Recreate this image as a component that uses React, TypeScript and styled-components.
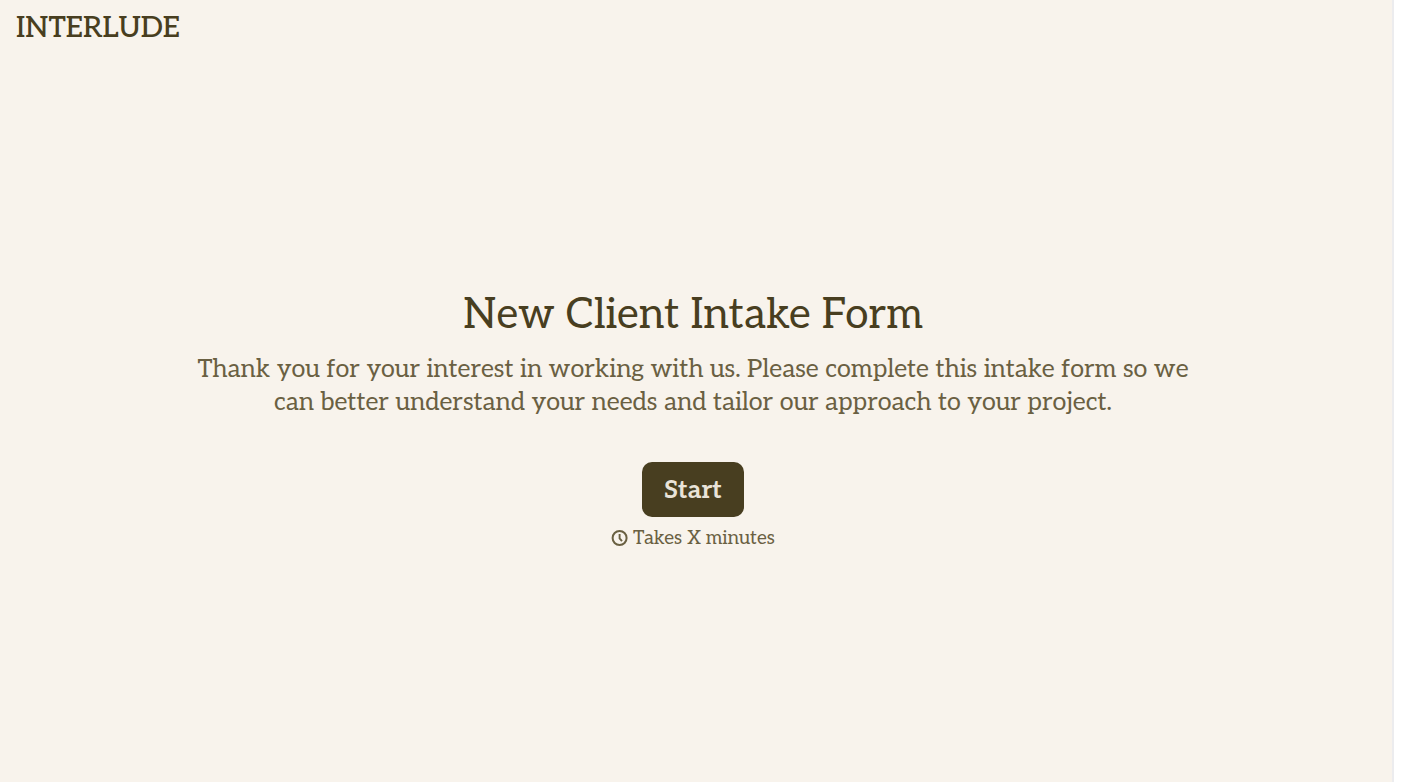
import React from "react";
import styled, { createGlobalStyle } from "styled-components";

const GlobalStyle = createGlobalStyle`
  *, *::before, *::after { box-sizing: border-box; }
  html { background: #ffffff; }
  body { margin: 0; }
`;

const Page = styled.div`
  min-height: 100vh;
  margin-right: 10px;
  display: flex;
  flex-direction: column;
  background: #f8f3ec;
  border-right: 2px solid #ececee;
  color: #483e20;
  font-family: Aleo, "Liberation Serif", serif;
`;

const Header = styled.header`
  padding: 11px 16px 5px;
`;

const Brand = styled.a`
  display: inline-block;
  color: inherit;
  text-decoration: none;
  font-size: 29px;
  font-weight: 500;
  line-height: 36px;
`;

const Welcome = styled.main`
  flex: 1;
  display: flex;
  flex-direction: column;
  align-items: center;
  justify-content: center;
  padding: 4px 38px 0 32px;
  text-align: center;
`;

const Title = styled.h1`
  margin: 0 0 10px;
  font-size: 42px;
  font-weight: 400;
  line-height: 56px;
`;

const Intro = styled.p`
  margin: 0 0 43px;
  max-width: 1000px;
  color: #6a6042;
  font-size: 25px;
  line-height: 33px;
`;

const StartButton = styled.button`
  height: 55px;
  padding: 0 22px;
  border: 0;
  border-radius: 10px;
  background: #483e20;
  color: #e9e3d8;
  font: 700 25px/32px Aleo, "Liberation Serif", serif;
  cursor: pointer;
`;

const Duration = styled.p`
  display: flex;
  align-items: center;
  gap: 4px;
  margin: 10px 0 0;
  color: #6a6042;
  font-size: 19px;
  line-height: 24px;
`;

const ClockIcon = () => (
  <svg width="18" height="18" viewBox="0 0 18 18" fill="none" stroke="currentColor" strokeWidth="2" aria-hidden="true">
    <circle cx="8.6" cy="8" r="7" />
    <path d="M8.6 4V8.4L11 11.2" strokeWidth="1.9" />
  </svg>
);

export default function App() {
  return (
    <>
      <GlobalStyle />
      <Page>
        <Header>
          <Brand href="#">INTERLUDE</Brand>
        </Header>
        <Welcome>
          <Title>New Client Intake Form</Title>
          <Intro>
            Thank you for your interest in working with us. Please complete this intake form so we can better
            understand your needs and tailor our approach to your project.
          </Intro>
          <StartButton type="button">Start</StartButton>
          <Duration>
            <ClockIcon />
            Takes X minutes
          </Duration>
        </Welcome>
      </Page>
    </>
  );
}
